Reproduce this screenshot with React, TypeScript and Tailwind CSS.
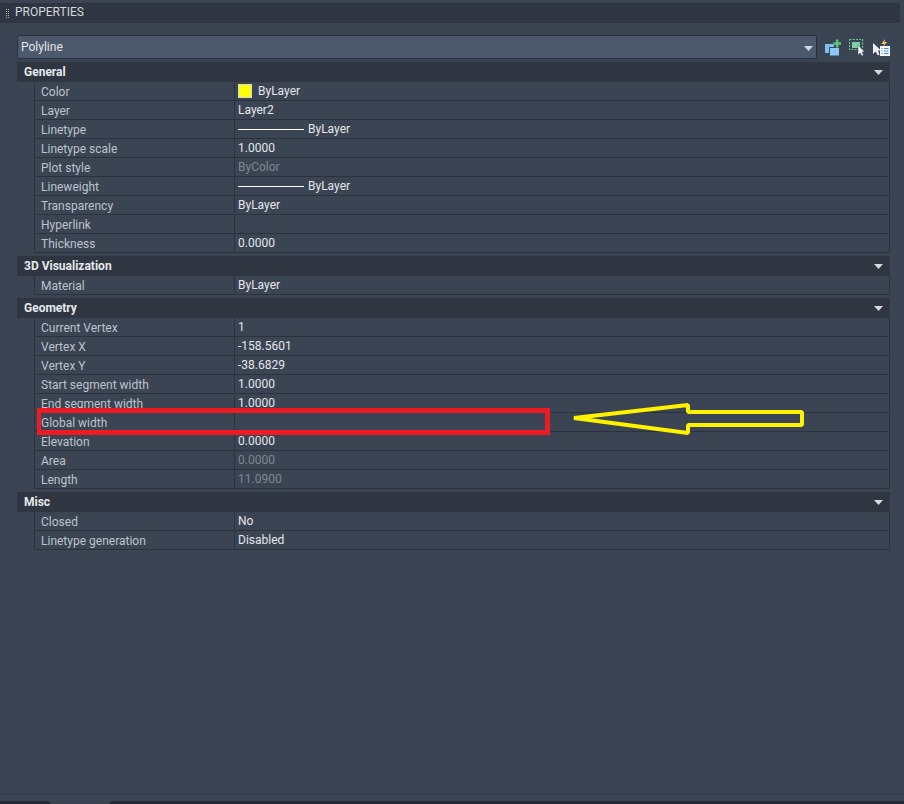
import React from "react";

type Row = { label: string; value?: string; kind?: "swatch" | "line" | "dim" };
type Section = { title: string; rows: Row[] };

const sections: Section[] = [
  {
    title: "General",
    rows: [
      { label: "Color", value: "ByLayer", kind: "swatch" },
      { label: "Layer", value: "Layer2" },
      { label: "Linetype", value: "ByLayer", kind: "line" },
      { label: "Linetype scale", value: "1.0000" },
      { label: "Plot style", value: "ByColor", kind: "dim" },
      { label: "Lineweight", value: "ByLayer", kind: "line" },
      { label: "Transparency", value: "ByLayer" },
      { label: "Hyperlink" },
      { label: "Thickness", value: "0.0000" },
    ],
  },
  { title: "3D Visualization", rows: [{ label: "Material", value: "ByLayer" }] },
  {
    title: "Geometry",
    rows: [
      { label: "Current Vertex", value: "1" },
      { label: "Vertex X", value: "-158.5601" },
      { label: "Vertex Y", value: "-38.6829" },
      { label: "Start segment width", value: "1.0000" },
      { label: "End segment width", value: "1.0000" },
      { label: "Global width" },
      { label: "Elevation", value: "0.0000" },
      { label: "Area", value: "0.0000", kind: "dim" },
      { label: "Length", value: "11.0900", kind: "dim" },
    ],
  },
  {
    title: "Misc",
    rows: [
      { label: "Closed", value: "No" },
      { label: "Linetype generation", value: "Disabled" },
    ],
  },
];

function Caret({ className }: { className: string }) {
  return (
    <svg width="9" height="5" viewBox="0 0 9 5" className={className}>
      <path d="M0 0H9L4.5 5Z" fill="#d5d9de" />
    </svg>
  );
}

function PropertyRow({ row }: { row: Row }) {
  return (
    <div className="flex h-[19px] border-b border-[#2c323d]">
      <div className="w-[200px] shrink-0 border-r border-[#2c323d] pl-[6px] pt-px leading-[19px] text-[#bcc3cc]">{row.label}</div>
      <div className={`flex min-w-0 flex-1 items-center pl-[3px] ${row.kind === "dim" ? "text-[#7f8794]" : "text-[#e3e6ea]"}`}>
        {row.kind === "swatch" && <span className="mr-[6px] h-[14px] w-[14px] border border-[#d8d8d8] bg-[#ffff00]" />}
        {row.kind === "line" && <span className="mr-[4px] h-px w-[66px] bg-white" />}
        {row.value}
      </div>
    </div>
  );
}

function PropertySection({ section }: { section: Section }) {
  return (
    <section className="mb-[3px]">
      <div className="flex h-[20px] items-center justify-between bg-[#2f3541] pl-[7px] pr-[7px] font-bold text-[#e6e8eb]">
        {section.title}
        <Caret className="" />
      </div>
      <div className="ml-[17px] border-l border-r border-[#2c323d]">
        {section.rows.map((r) => (
          <PropertyRow key={r.label} row={r} />
        ))}
      </div>
    </section>
  );
}

function Icons() {
  return (
    <div className="ml-[8px] flex items-center gap-[8px]">
      <svg width="16" height="17" viewBox="0 0 16 17">
        <rect x="0" y="5" width="9" height="9" fill="#7fbdf2" />
        <rect x="4.5" y="8.5" width="10" height="8.5" fill="#8cc8f8" stroke="#3b4453" strokeWidth="1" />
        <path d="M8.5 4.5H16M12.2 0.5V8.5" stroke="#55c878" strokeWidth="2.4" />
      </svg>
      <svg width="16" height="17" viewBox="0 0 16 17">
        <rect x="0.5" y="0.5" width="13" height="10" fill="none" stroke="#5fd08a" strokeWidth="1.2" strokeDasharray="2 1.2" />
        <rect x="3" y="3" width="8" height="6" fill="#7ad0a0" />
        <path d="M9 6V16L11 14L13 17L14.5 16L13 13H15.5Z" fill="#eef0f2" stroke="#3b4453" strokeWidth="0.4" />
      </svg>
      <svg width="17" height="18" viewBox="0 0 17 18">
        <path d="M9 5L12 1L11.5 4H14L10.5 8.5L11 6H8.5Z" fill="#f4c060" />
        <path d="M0 5V16L2.5 13.5L5 17.5L6.5 16.5L5 12.5H8Z" fill="#eef0f2" />
        <rect x="7" y="8" width="10" height="10" fill="#f5f7f9" />
        <path d="M8.5 10.5H9.5M8.5 13H9.5M8.5 15.5H9.5M11 10.5H15.5M11 13H15.5M11 15.5H15.5" stroke="#3a8fd8" strokeWidth="1.2" />
      </svg>
    </div>
  );
}

export default function App() {
  return (
    <div className="relative flex h-[804px] w-[904px] flex-col overflow-hidden bg-[#3b4453] font-['Roboto','Noto_Sans',sans-serif] text-[12px]">
      <div className="mt-[3px] mr-[4px] flex h-[20px] shrink-0 items-center rounded-tr-[3px] bg-[#2f3541] pb-[2px] pl-[6px] text-[#d5d9de]">
        <div className="mr-[6px] mt-[2px] grid grid-cols-2 gap-px">
          {Array.from({ length: 10 }).map((_, i) => (
            <span key={i} className="h-px w-px bg-[#aab0b9]" />
          ))}
        </div>
        PROPERTIES
      </div>

      <div className="flex-1 pl-[17px] pt-[12px]">
        <div className="flex items-center">
          <div className="flex h-[24px] w-[800px] items-center justify-between rounded-[2px] border border-[#2a303b] bg-[#4c586b] pb-[1px] pl-[3px] pr-[2px] text-[#e3e6ea]">
            Polyline
            <Caret className="mr-[1px] mt-[3px]" />
          </div>
          <Icons />
        </div>
        <div className="mt-[3px] w-[873px]">
          {sections.map((s) => (
            <PropertySection key={s.title} section={s} />
          ))}
        </div>
      </div>

      <div className="mb-[6px] h-px shrink-0 bg-[#333a47]" />
      <div className="flex h-[3px] shrink-0">
        <div className="w-[50px] bg-[#262b35]" />
        <div className="w-[60px] bg-[#3b4453]" />
        <div className="flex-1 bg-[#262b35]" />
      </div>

      <div className="absolute left-[37px] top-[408px] h-[27px] w-[513px] border-[5px] border-l-4 border-[#ed1c24]" />
      <svg className="absolute left-[560px] top-[395px]" width="260" height="50" viewBox="560 395 260 50">
        <path
          d="M574 418L688 405V412H802V425H688V433Z"
          fill="none"
          stroke="#fff200"
          strokeWidth="4"
          strokeLinejoin="bevel"
        />
      </svg>
    </div>
  );
}
